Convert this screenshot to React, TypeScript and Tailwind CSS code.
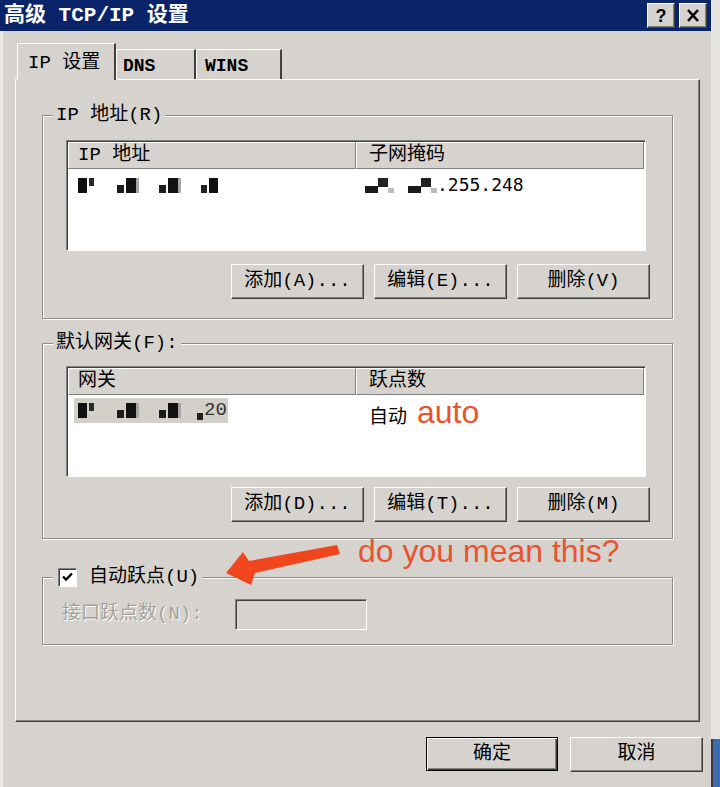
const raised =
  'border border-t-white border-l-white border-r-[#404040] border-b-[#404040] shadow-[inset_-1px_-1px_0_#808080]';
const sunken =
  'border border-t-[#808080] border-l-[#808080] border-r-white border-b-white shadow-[inset_1px_1px_0_#404040]';
const etched = 'border border-[#8f8c86] shadow-[inset_1px_1px_0_#fff,1px_1px_0_#fff]';

function Btn({ label }: { label: string }) {
  return (
    <button
      className={`${raised} w-[133px] h-[35px] bg-[#d6d3ce] text-[19px] leading-none text-black flex items-center justify-center`}
    >
      {label}
    </button>
  );
}

// pixelated blocks that hide the address digits
function Blob() {
  return (
    <span className="flex gap-[2px] items-end">
      <span className="w-[7px] h-[8px] bg-[#1c1c1c]" />
      <span className="w-[10px] h-[15px] bg-[#111] shadow-[3px_0_0_#a5a5a5]" />
    </span>
  );
}

function Masked({ tail }: { tail?: string }) {
  return (
    <span className="flex items-center gap-[23px] h-[16px]">
      <span className="flex items-end gap-[2px]">
        <span className="w-[9px] h-[15px] bg-[#111]" />
        <span className="w-[5px] h-[8px] bg-[#2a2a2a] self-start" />
      </span>
      <Blob />
      <Blob />
      {tail ? (
        <span className="flex items-center gap-[1px] -ml-[4px]">
          <span className="w-[6px] h-[7px] bg-[#222] self-end" />
          <span className="text-[19px] leading-none text-[#333]">{tail}</span>
        </span>
      ) : (
        <span className="flex items-end gap-[2px]">
          <span className="w-[6px] h-[8px] bg-[#222]" />
          <span className="w-[9px] h-[15px] bg-[#111]" />
        </span>
      )}
    </span>
  );
}

function MaskBit() {
  return (
    <span className="flex items-center h-[15px]">
      <span className="w-[13px] h-[7px] bg-[#1a1a1a] self-end" />
      <span className="w-[10px] h-[9px] bg-[#222] self-start" />
      <span className="w-[6px] h-[5px] bg-[#bbb] self-end" />
    </span>
  );
}

function ListView({
  cols,
  children,
}: {
  cols: [string, string];
  children: React.ReactNode;
}) {
  return (
    <div className={`${sunken} h-[111px] bg-white p-[1px] flex flex-col`}>
      <div className="flex h-[27px] bg-[#d6d3ce]">
        <div className="border border-t-white border-l-white border-r-[#808080] border-b-[#808080] w-[288px] pl-[9px] flex items-center text-[19px] leading-none">
          {cols[0]}
        </div>
        <div className="border border-t-white border-l-white border-r-[#808080] border-b-[#808080] flex-1 pl-[12px] flex items-center text-[19px] leading-none">
          {cols[1]}
        </div>
      </div>
      {children}
    </div>
  );
}

function Group({
  legend,
  children,
  className = '',
}: {
  legend: React.ReactNode;
  children: React.ReactNode;
  className?: string;
}) {
  return (
    <fieldset className={`${etched} mx-[26px] ${className}`}>
      <legend className="ml-[10px] px-[3px] bg-[#d6d3ce] h-[22px] leading-[22px] text-[19px]">
        {legend}
      </legend>
      {children}
    </fieldset>
  );
}

export default function App() {
  return (
    <div className="w-[720px] h-[787px] overflow-hidden flex bg-[#d6d3ce] text-black font-['Liberation_Mono','Noto_Sans_CJK_SC',monospace]">
      <div className="w-[711px] flex flex-col border-l-[3px] border-l-[#ebe9e5]">
        {/* caption */}
        <div className="h-[31px] bg-[#0a246a] flex items-center justify-between pl-[4px] pr-[4px] -ml-[3px]">
          <span className="text-white font-bold text-[21px] leading-none">
            高级 TCP/IP 设置
          </span>
          <div className="flex gap-[4px]">
            <span
              className={`${raised} w-[28px] h-[25px] bg-[#d6d3ce] flex items-center justify-center font-['Liberation_Sans',sans-serif] font-bold text-[18px] leading-none`}
            >
              ?
            </span>
            <span className={`${raised} w-[28px] h-[25px] bg-[#d6d3ce] flex items-center justify-center`}>
              <svg width="14" height="13" viewBox="0 0 14 13">
                <path d="M2 1 L12 12 M12 1 L2 12" stroke="#000" strokeWidth="2.6" />
              </svg>
            </span>
          </div>
        </div>

        {/* tabs */}
        <div className="pl-[14px] pt-[13px] flex items-end h-[48px]">
          <div className="relative z-10 -mb-[1px] h-[37px] w-[99px] bg-[#d6d3ce] border-t border-l border-t-white border-l-white border-r-2 border-r-[#404040] pl-[10px] pt-[3px] flex items-center text-[19px] leading-none">
            IP 设置
          </div>
          <div className="h-[30px] w-[80px] border-t border-l border-t-white border-l-white border-r-2 border-r-[#404040] pl-[6px] pt-[2px] flex items-center text-[18px] font-bold leading-none">
            DNS
          </div>
          <div className="h-[30px] w-[86px] border-t border-l border-t-white border-l-white border-r-2 border-r-[#404040] pl-[8px] pt-[2px] flex items-center text-[18px] font-bold leading-none">
            WINS
          </div>
        </div>

        {/* tab page */}
        <div className={`${raised} ml-[12px] w-[685px] h-[643px] flex flex-col`}>
          <Group legend="IP 地址(R)" className="mt-[24px]">
            <div className="pl-[23px] pr-[26px] pt-[14px] pb-[19px]">
              <ListView cols={['IP 地址', '子网掩码']}>
                <div className="flex h-[26px] items-center mt-[3px]">
                  <div className="w-[288px] pl-[10px]">
                    <Masked />
                  </div>
                  <div className="pl-[9px] flex items-center gap-[14px]">
                    <MaskBit />
                    <MaskBit />
                    <span className="font-['DejaVu_Sans_Mono',monospace] text-[18px] leading-none -ml-[14px]">
                      .255.248
                    </span>
                  </div>
                </div>
              </ListView>
              <div className="flex justify-end gap-[10px] mt-[13px] -mr-[4px]">
                <Btn label="添加(A)..." />
                <Btn label="编辑(E)..." />
                <Btn label="删除(V)" />
              </div>
            </div>
          </Group>

          <Group legend="默认网关(F):" className="mt-[13px]">
            <div className="pl-[23px] pr-[26px] pt-[12px] pb-[16px]">
              <ListView cols={['网关', '跃点数']}>
                <div className="flex h-[26px] items-center mt-[2px]">
                  <div className="w-[288px] pl-[6px]">
                    <div className="w-[154px] h-[25px] bg-[#d3d0ca] pl-[4px] flex items-center">
                      <Masked tail="20" />
                    </div>
                  </div>
                  <div className="pl-[13px] flex items-baseline gap-[10px] h-[26px] -mt-[2px]">
                    <span className="text-[19px] leading-none">自动</span>
                    <span className="font-['Liberation_Sans',sans-serif] text-[32px] leading-none text-[#e9532f]">
                      auto
                    </span>
                  </div>
                </div>
              </ListView>
              <div className="flex justify-end gap-[10px] mt-[10px] -mr-[4px]">
                <Btn label="添加(D)..." />
                <Btn label="编辑(T)..." />
                <Btn label="删除(M)" />
              </div>
            </div>
          </Group>

          <Group
            className="mt-[27px]"
            legend={
              <span className="flex items-center gap-[12px] h-[22px] ml-[2px]">
                <span className={`${sunken} w-[19px] h-[19px] bg-white flex items-center justify-center`}>
                  <svg width="11" height="10" viewBox="0 0 11 10">
                    <path d="M1 4.5 L4 7.5 L10 1.5" stroke="#000" strokeWidth="2.4" fill="none" />
                  </svg>
                </span>
                <span>自动跃点(U)</span>
              </span>
            }
          >
            <div className="pl-[19px] pt-[11px] pb-[14px] flex items-center">
              <span className="w-[173px] text-[19px] leading-none text-[#a4a09a] [text-shadow:1px_1px_0_#fff]">
                接口跃点数(N):
              </span>
              <span className={`${sunken} w-[132px] h-[31px] bg-[#d6d3ce]`} />
            </div>
          </Group>
        </div>

        {/* dialog buttons */}
        <div className="flex justify-end gap-[12px] pr-[8px] mt-[15px]">
          <button className="w-[132px] h-[34px] border border-black bg-[#d6d3ce] shadow-[inset_1px_1px_0_#fff,inset_-1px_-1px_0_#404040,inset_-2px_-2px_0_#808080] text-[19px] leading-none flex items-center justify-center">
            确定
          </button>
          <Btn label="取消" />
        </div>
      </div>

      {/* desktop edge beside the dialog */}
      <div className="flex-1 flex flex-col">
        <div className="flex-1 bg-[#e6e4e0]" />
        <div className="h-[48px] border-l-2 border-l-[#3a3a3a] bg-[#3b6db0]" />
      </div>

      {/* red annotation */}
      <div className="absolute left-[358px] top-[535px] font-['Liberation_Sans',sans-serif] text-[32px] leading-none text-[#e9532f]">
        do you mean this?
      </div>
      <svg className="absolute left-0 top-0 pointer-events-none" width="720" height="787" viewBox="0 0 720 787">
        <polygon points="226,573 243,552 249,561 337,545 340,554 255,573 251,585" fill="#f0461e" />
      </svg>
    </div>
  );
}
